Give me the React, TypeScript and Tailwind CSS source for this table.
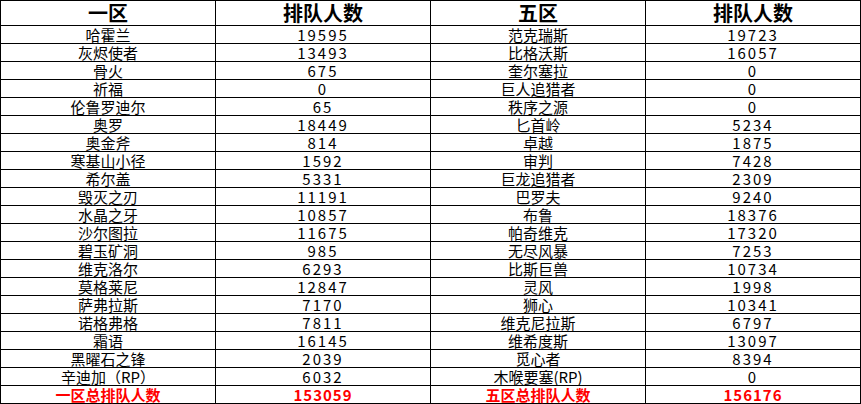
import { Fragment } from 'react';

const left: [string, string][] = [
  ['哈霍兰', '19595'],
  ['灰烬使者', '13493'],
  ['骨火', '675'],
  ['祈福', '0'],
  ['伦鲁罗迪尔', '65'],
  ['奥罗', '18449'],
  ['奥金斧', '814'],
  ['寒基山小径', '1592'],
  ['希尔盖', '5331'],
  ['毁灭之刃', '11191'],
  ['水晶之牙', '10857'],
  ['沙尔图拉', '11675'],
  ['碧玉矿洞', '985'],
  ['维克洛尔', '6293'],
  ['莫格莱尼', '12847'],
  ['萨弗拉斯', '7170'],
  ['诺格弗格', '7811'],
  ['霜语', '16145'],
  ['黑曜石之锋', '2039'],
  ['辛迪加（RP）', '6032'],
];

const right: [string, string][] = [
  ['范克瑞斯', '19723'],
  ['比格沃斯', '16057'],
  ['奎尔塞拉', '0'],
  ['巨人追猎者', '0'],
  ['秩序之源', '0'],
  ['匕首岭', '5234'],
  ['卓越', '1875'],
  ['审判', '7428'],
  ['巨龙追猎者', '2309'],
  ['巴罗夫', '9240'],
  ['布鲁', '18376'],
  ['帕奇维克', '17320'],
  ['无尽风暴', '7253'],
  ['比斯巨兽', '10734'],
  ['灵风', '1998'],
  ['狮心', '10341'],
  ['维克尼拉斯', '6797'],
  ['维希度斯', '13097'],
  ['觅心者', '8394'],
  ['木喉要塞(RP)', '0'],
];

const font = { fontFamily: '"Noto Sans CJK SC", "Liberation Sans", sans-serif' };

type Kind = 'head' | 'name' | 'num' | 'total' | 'totalNum';

function Cell({ children, kind }: { children: React.ReactNode; kind: Kind }) {
  const base = 'bg-white flex items-end justify-center whitespace-nowrap';
  if (kind === 'head')
    return <div className={`${base} items-center text-[20px] font-bold leading-[24px] text-black`}>{children}</div>;
  if (kind === 'num')
    return <div className={`${base} text-[15px] leading-[17px] tracking-[2px] text-black`}>{children}</div>;
  if (kind === 'total')
    return <div className={`${base} text-[15px] font-bold leading-[17px] text-[#ff0000]`}>{children}</div>;
  if (kind === 'totalNum')
    return <div className={`${base} text-[15px] font-bold leading-[17px] tracking-[1px] text-[#ff0000]`}>{children}</div>;
  return <div className={`${base} text-[15px] leading-[17px] text-black`}>{children}</div>;
}

export default function App() {
  return (
    <div className="w-[861px] h-[404px] bg-white overflow-hidden" style={font}>
      <div className="grid grid-cols-[repeat(4,214px)] grid-rows-[24px_repeat(21,17px)] gap-px p-px bg-black w-[861px]">
        <Cell kind="head">一区</Cell>
        <Cell kind="head">排队人数</Cell>
        <Cell kind="head">五区</Cell>
        <Cell kind="head">排队人数</Cell>
        {left.map((l, i) => (
          <Fragment key={i}>
            <Cell kind="name">{l[0]}</Cell>
            <Cell kind="num">{l[1]}</Cell>
            <Cell kind="name">{right[i][0]}</Cell>
            <Cell kind="num">{right[i][1]}</Cell>
          </Fragment>
        ))}
        <Cell kind="total">一区总排队人数</Cell>
        <Cell kind="totalNum">153059</Cell>
        <Cell kind="total">五区总排队人数</Cell>
        <Cell kind="totalNum">156176</Cell>
      </div>
    </div>
  );
}
